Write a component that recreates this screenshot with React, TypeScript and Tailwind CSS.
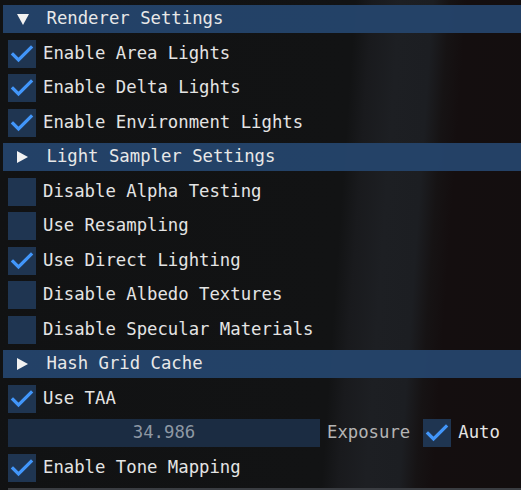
import React from "react";

const font = "font-['DejaVu_Sans_Mono','Liberation_Mono',monospace]";

const Check = () => (
    <svg width="28" height="28" viewBox="0 0 28 28" className="block">
        <polyline points="5,14.5 10.5,20 23,7.5" fill="none" stroke="#4296fa" strokeWidth="3.2" strokeLinecap="square"/>
    </svg>
);

const Checkbox = ({checked}: { checked?: boolean }) => (
    <div className="w-7 h-7 shrink-0 bg-[#1f3551]">
        {checked && <Check/>}
    </div>
);

const Header = ({label, open}: { label: string; open?: boolean }) => (
    <div className="flex items-center h-7 shrink-0 ml-[3px] bg-[#25446b]/95">
        <div className="w-[43.5px] shrink-0 flex items-center pl-[14px]">
            {open ? (
                <svg width="12" height="11" viewBox="0 0 12 11" className="block">
                    <polygon points="0,0 12,0 6,11" fill="#f2f2f2"/>
                </svg>
            ) : (
                <svg width="11" height="12" viewBox="0 0 11 12" className="block">
                    <polygon points="0,0 11,6 0,12" fill="#f2f2f2"/>
                </svg>
            )}
        </div>
        <span className="text-[#e8e8e8] leading-none">{label}</span>
    </div>
);

const Row = ({label, checked}: { label: string; checked?: boolean }) => (
    <div className="flex items-center h-7 shrink-0 pl-2 gap-[7px]">
        <Checkbox checked={checked}/>
        <span className="text-[#e4e4e4] leading-none">{label}</span>
    </div>
);

export default function App() {
    return (
        <div
            className={`w-[521px] h-[490px] overflow-hidden flex flex-col gap-[6.5px] pt-[5px] text-[17.3px] ${font} bg-[linear-gradient(94deg,#111213_0%,#121314_64%,#191a1d_67%,#1d1f23_72%,#1c1e22_78%,#161314_81%,#140e0f_84%,#130e0f_100%)]`}>
            <Header label="Renderer Settings" open/>
            <Row label="Enable Area Lights" checked/>
            <Row label="Enable Delta Lights" checked/>
            <Row label="Enable Environment Lights" checked/>
            <Header label="Light Sampler Settings"/>
            <Row label="Disable Alpha Testing"/>
            <Row label="Use Resampling"/>
            <Row label="Use Direct Lighting" checked/>
            <Row label="Disable Albedo Textures"/>
            <Row label="Disable Specular Materials"/>
            <Header label="Hash Grid Cache"/>
            <Row label="Use TAA" checked/>
            <div className="flex items-center h-7 shrink-0 pl-2">
                <div className="w-[312px] h-7 shrink-0 bg-[#1b2c42] flex items-center justify-center">
                    <span className="text-[#8e98a4] leading-none">34.986</span>
                </div>
                <span className="ml-[7px] text-[#b4b4b4] leading-none">Exposure</span>
                <div className="ml-[13px]">
                    <Checkbox checked/>
                </div>
                <span className="ml-[7px] text-[#e4e4e4] leading-none">Auto</span>
            </div>
            <Row label="Enable Tone Mapping" checked/>
            <div className="h-7 ml-2 shrink-0 bg-[#3a3d42]"/>
        </div>
    );
}
